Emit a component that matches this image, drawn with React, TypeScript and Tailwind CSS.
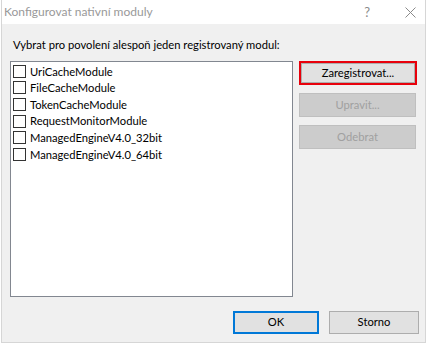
import React from "react";

const modules = [
  "UriCacheModule",
  "FileCacheModule",
  "TokenCacheModule",
  "RequestMonitorModule",
  "ManagedEngineV4.0_32bit",
  "ManagedEngineV4.0_64bit",
];

export default function App() {
  return (
    <div
      className="w-[427px] h-[344px] bg-white text-[11.2px] text-[#000]"
      style={{ fontFamily: 'Lato, "Segoe UI", sans-serif' }}
    >
      <div className="ml-[1px] w-[425px] h-[343px] flex flex-col border-x border-b border-[#d6d6d6] bg-[#f0f0f0]">
        {/* title bar */}
        <div className="h-[24px] bg-white flex items-center pl-[2px] pr-[8px]">
          <span className="text-[#999999] text-[12px] leading-none">Konfigurovat nativní moduly</span>
          <span className="ml-auto mr-[35px] text-[#8a8a8a] text-[13px] leading-none">?</span>
          <svg width="11" height="11" viewBox="0 0 11 11" className="mr-[1px]">
            <path d="M0.5 0.5 L10.5 10.5 M10.5 0.5 L0.5 10.5" stroke="#8a8a8a" strokeWidth="1" />
          </svg>
        </div>
        {/* body */}
        <div className="flex-1 flex flex-col pl-[8px] pt-[13px]">
          <div className="h-[16px] leading-[16px] pl-[3px]">Vybrat pro povolení alespoň jeden registrovaný modul:</div>
          <div className="flex mt-[8px]">
            <div className="w-[283px] h-[236px] bg-white border border-[#828790] pt-[1px] pl-[2px]">
              {modules.map((m) => (
                <div key={m} className="h-[16.6px] flex items-center">
                  <span className="w-[13px] h-[13px] border border-[#333333] bg-white shrink-0" />
                  <span className="ml-[4px] leading-none">{m}</span>
                </div>
              ))}
            </div>
            <div className="ml-[6px] w-[118px] flex flex-col gap-[8px]">
              <div className="h-[24px] border-2 border-[#e8000b]">
                <div className="h-full bg-[#e1e1e1] border border-[#adadad] flex items-center justify-center">
                  Zaregistrovat...
                </div>
              </div>
              <div className="h-[24px] w-[117px] bg-[#cccccc] border border-[#bfbfbf] flex items-center justify-center text-[#a0a0a0]">
                Upravit...
              </div>
              <div className="h-[24px] w-[117px] bg-[#cccccc] border border-[#bfbfbf] flex items-center justify-center text-[#a0a0a0]">
                Odebrat
              </div>
            </div>
          </div>
          <div className="flex mt-[14px] pl-[223px] gap-[10px]">
            <div className="w-[86px] h-[23px] bg-[#e1e1e1] border-2 border-[#0078d7] flex items-center justify-center">
              OK
            </div>
            <div className="w-[90px] h-[23px] bg-[#e1e1e1] border border-[#adadad] flex items-center justify-center">
              Storno
            </div>
          </div>
        </div>
      </div>
    </div>
  );
}
